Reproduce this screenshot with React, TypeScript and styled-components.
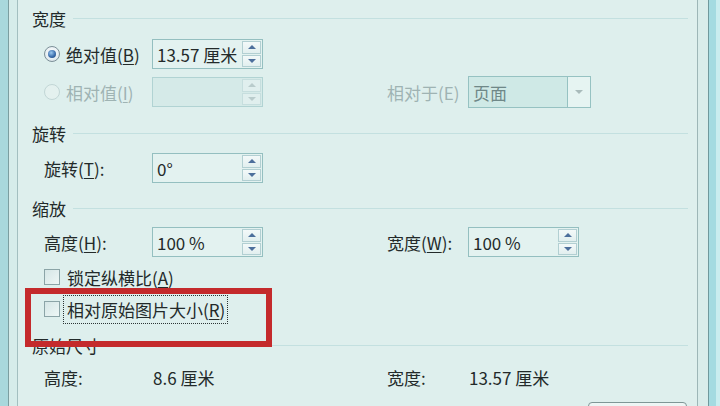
import React from "react";
import styled, { createGlobalStyle } from "styled-components";

const Global = createGlobalStyle`
  html, body { margin: 0; padding: 0; overflow: hidden; background: #deefed; }
  body { font-family: "Noto Sans CJK SC", "Noto Sans", sans-serif; color: #232a2a; }
`;

const Frame = styled.div`
  display: flex;
  width: 720px;
  height: 406px;
  overflow: hidden;
  position: relative;
  background: #deefed;
`;

const LeftEdge = styled.div`
  width: 18px;
  flex: none;
  background: linear-gradient(
    to right,
    #a9d8dc 0 8px,
    #7c9ea0 8px 9px,
    #d6ecea 9px 17px,
    #a3bfc0 17px 18px
  );
`;

const RightEdge = styled.div`
  width: 23px;
  flex: none;
  background: linear-gradient(
    to right,
    #9db6b7 0 1px,
    #d9ecea 1px 11px,
    #6f989c 11px 12px,
    #a4dbe1 12px 19px,
    #c9edef 19px 23px
  );
`;

const Content = styled.div`
  flex: 1;
  display: flex;
  flex-direction: column;
  padding: 5px 9px 0 0;
  font-size: 17px;
`;

const SectionHeader = styled.div<{ $top?: number }>`
  display: flex;
  align-items: center;
  gap: 7px;
  height: 26px;
  padding-left: 14px;
  margin-top: ${(p) => p.$top ?? 0}px;
  flex: none;
`;

const HeaderLine = styled.div`
  flex: 1;
  height: 1px;
  background: #c3e0e0;
`;

const Row = styled.div<{ $h?: number; $top?: number }>`
  display: flex;
  align-items: center;
  height: ${(p) => p.$h ?? 38}px;
  margin-top: ${(p) => p.$top ?? 0}px;
  padding-left: 26px;
  flex: none;
`;

const Label = styled.div<{ $w: number; $disabled?: boolean; $gap?: number }>`
  display: flex;
  align-items: center;
  width: ${(p) => p.$w}px;
  margin-left: ${(p) => p.$gap ?? 0}px;
  flex: none;
  white-space: nowrap;
  color: ${(p) => (p.$disabled ? "#9fb3b3" : "#232a2a")};
`;

const Value = styled.div`
  width: 111px;
  padding-left: 1px;
  box-sizing: border-box;
  white-space: nowrap;
  flex: none;
`;

const U = styled.span`
  text-decoration: underline;
  text-underline-offset: 2px;
`;

const Radio = styled.span<{ $checked?: boolean; $disabled?: boolean }>`
  position: relative;
  width: 16px;
  height: 16px;
  border-radius: 50%;
  box-sizing: border-box;
  margin-right: 6px;
  flex: none;
  border: 1px solid ${(p) => (p.$disabled ? "#c2d6d6" : "#7c8f98")};
  background: ${(p) =>
    p.$disabled
      ? "#e4f1ef"
      : "radial-gradient(circle at 50% 40%, #ffffff 0%, #e6eef2 60%, #c9d6dc 100%)"};
  &::after {
    content: "";
    display: ${(p) => (p.$checked ? "block" : "none")};
    position: absolute;
    left: 3px;
    top: 3px;
    width: 8px;
    height: 8px;
    border-radius: 50%;
    background: radial-gradient(circle at 40% 35%, #9cc9f0 0%, #3d6fae 55%, #1b3f72 100%);
  }
`;

const Checkbox = styled.span`
  width: 16px;
  height: 16px;
  box-sizing: border-box;
  margin-right: 7px;
  flex: none;
  border: 1px solid #8ba4a7;
  background: linear-gradient(135deg, #d5e6e6 0%, #eef7f6 100%);
`;

const FocusText = styled.span`
  outline: 1px dotted #2c3434;
  outline-offset: 0;
  padding: 1px 2px 1px 3px;
  margin-left: -3px;
`;

const SpinBox = styled.div<{ $disabled?: boolean; $w?: number }>`
  display: flex;
  align-items: stretch;
  width: ${(p) => p.$w ?? 111}px;
  height: 30px;
  box-sizing: border-box;
  border: 1px solid ${(p) => (p.$disabled ? "#b1d3d3" : "#94bfc0")};
  background: ${(p) => (p.$disabled ? "#d5eae8" : "#e3f2f0")};
  flex: none;
`;

const SpinText = styled.div`
  flex: 1;
  display: flex;
  align-items: center;
  padding-left: 4px;
  white-space: nowrap;
`;

const SpinButtons = styled.div`
  width: 19px;
  display: flex;
  flex-direction: column;
  padding: 1px 1px 1px 0;
  gap: 1px;
`;

const SpinBtn = styled.div<{ $down?: boolean; $disabled?: boolean }>`
  flex: 1;
  display: flex;
  align-items: center;
  justify-content: center;
  border: 1px solid ${(p) => (p.$disabled ? "#c6dede" : "#b2cfd2")};
  background: ${(p) => (p.$disabled ? "#e0efee" : "linear-gradient(#f3f9f9, #e2efef)")};
  &::before {
    content: "";
    width: 0;
    height: 0;
    border-left: 4px solid transparent;
    border-right: 4px solid transparent;
    ${(p) =>
      p.$down
        ? `border-top: 4px solid ${p.$disabled ? "#b9cccc" : "#4d6f9c"};`
        : `border-bottom: 4px solid ${p.$disabled ? "#b9cccc" : "#4d6f9c"};`}
  }
`;

const Dropdown = styled.div`
  display: flex;
  width: 123px;
  height: 32px;
  box-sizing: border-box;
  border: 1px solid #96c2c2;
  background: #cfe9e6;
  flex: none;
`;

const DropText = styled.div`
  flex: 1;
  display: flex;
  align-items: center;
  padding-left: 4px;
  color: #6f8888;
`;

const DropButton = styled.div`
  width: 22px;
  display: flex;
  align-items: center;
  justify-content: center;
  border-left: 1px solid #96c2c2;
  background: #e6f4f2;
  &::before {
    content: "";
    border-left: 4px solid transparent;
    border-right: 4px solid transparent;
    border-top: 4px solid #a9bbbb;
  }
`;

const Footer = styled.div`
  display: flex;
  justify-content: flex-end;
  padding-right: 1px;
  margin-top: 6px;
`;

const Button = styled.div`
  width: 99px;
  height: 28px;
  box-sizing: border-box;
  border: 1px solid #7f9696;
  border-radius: 4px;
  background: linear-gradient(#eef6f5, #dfeceb);
`;

const Annotation = styled.div`
  position: absolute;
  left: 25px;
  top: 288px;
  width: 247px;
  height: 59px;
  box-sizing: border-box;
  border: 6px solid #c42a2c;
  pointer-events: none;
`;

function Spin({ value, disabled }: { value?: string; disabled?: boolean }) {
  return (
    <SpinBox $disabled={disabled}>
      <SpinText>{value}</SpinText>
      <SpinButtons>
        <SpinBtn $disabled={disabled} />
        <SpinBtn $down $disabled={disabled} />
      </SpinButtons>
    </SpinBox>
  );
}

function Header({ title, top }: { title: string; top?: number }) {
  return (
    <SectionHeader $top={top}>
      <span>{title}</span>
      <HeaderLine />
    </SectionHeader>
  );
}

export default function App() {
  return (
    <>
      <Global />
      <Frame>
        <LeftEdge />
        <Content>
          <Header title="宽度" />
          <Row $top={4}>
            <Label $w={108}>
              <Radio $checked />
              绝对值(<U>B</U>)
            </Label>
            <Spin value="13.57 厘米" />
          </Row>
          <Row>
            <Label $w={108} $disabled>
              <Radio $disabled />
              相对值(<U>I</U>)
            </Label>
            <Spin disabled />
            <Label $w={81} $gap={124} $disabled>
              相对于(E)
            </Label>
            <Dropdown>
              <DropText>页面</DropText>
              <DropButton />
            </Dropdown>
          </Row>

          <Header title="旋转" top={9} />
          <Row $top={3}>
            <Label $w={108}>
              旋转(<U>T</U>):
            </Label>
            <Spin value="0°" />
          </Row>

          <Header title="缩放" top={8} />
          <Row $top={2}>
            <Label $w={108}>
              高度(<U>H</U>):
            </Label>
            <Spin value="100 %" />
            <Label $w={81} $gap={124}>
              宽度(<U>W</U>):
            </Label>
            <Spin value="100 %" />
          </Row>
          <Row $h={32}>
            <Label $w={300}>
              <Checkbox />
              锁定纵横比(<U>A</U>)
            </Label>
          </Row>
          <Row $h={32}>
            <Label $w={300}>
              <Checkbox />
              <FocusText>
                相对原始图片大小(<U>R</U>)
              </FocusText>
            </Label>
          </Row>

          <Header title="原始尺寸" top={7} />
          <Row>
            <Label $w={108}>高度:</Label>
            <Value>8.6 厘米</Value>
            <Label $w={81} $gap={124}>
              宽度:
            </Label>
            <Value>13.57 厘米</Value>
          </Row>
          <Footer>
            <Button />
          </Footer>
        </Content>
        <RightEdge />
        <Annotation />
      </Frame>
    </>
  );
}
